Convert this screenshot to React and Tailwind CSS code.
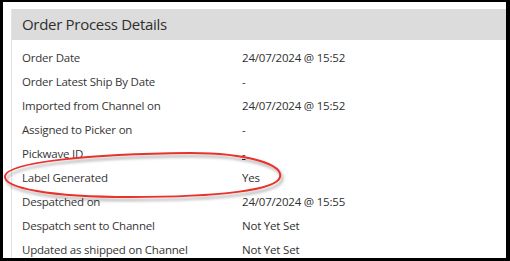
export default function App() {
  const rows = [
    ["Order Date", "24/07/2024 @ 15:52"],
    ["Order Latest Ship By Date", "-"],
    ["Imported from Channel on", "24/07/2024 @ 15:52"],
    ["Assigned to Picker on", "-"],
    ["Pickwave ID", "-", true],
    ["Label Generated", "Yes"],
    ["Despatched on", "24/07/2024 @ 15:55"],
    ["Despatch sent to Channel", "Not Yet Set"],
    ["Updated as shipped on Channel", "Not Yet Set"],
  ];
  return (
    <div className="relative w-[510px] h-[261px] bg-black pt-[2px] pl-[3px] pr-[4px] pb-[3px] overflow-hidden" style={{ fontFamily: '"Open Sans", "Noto Sans", sans-serif' }}>
      <div className="w-full h-full bg-white pt-[7px] pl-[8px] overflow-hidden">
        <div className="border-l border-[#e3e3e3] h-full">
          <div className="h-[31px] bg-[#dcdcdc] flex items-center pl-[10px] text-[15px] tracking-[-0.3px] text-[#2f2f2f]">
            Order Process Details
          </div>
          <div className="pt-[6px]">
            {rows.map(([l, v, link]) => (
              <div key={l} className="h-[24px] flex items-center text-[11.5px] tracking-[-0.2px] text-[#363636]">
                <div className="w-[230px] pl-[10px] shrink-0">{l}</div>
                <div className={link ? "underline text-[#2f2f2f]" : "text-[#2f2f2f]"}>{v}</div>
              </div>
            ))}
          </div>
        </div>
      </div>
      <svg className="absolute left-0 top-0 pointer-events-none" width="510" height="261">
        <defs>
          <filter id="sh" x="-10%" y="-30%" width="130%" height="180%">
            <feDropShadow dx="2" dy="3" stdDeviation="1.5" floodColor="#000" floodOpacity="0.35" />
          </filter>
        </defs>
        <path d="M 5 176 C 8 162, 90 154, 190 153 C 250 153, 283 165, 280 177 C 277 190, 220 197, 130 197 C 50 197, 3 188, 5 176 Z" fill="none" stroke="#e8302c" strokeWidth="2" filter="url(#sh)" />
      </svg>
    </div>
  );
}
